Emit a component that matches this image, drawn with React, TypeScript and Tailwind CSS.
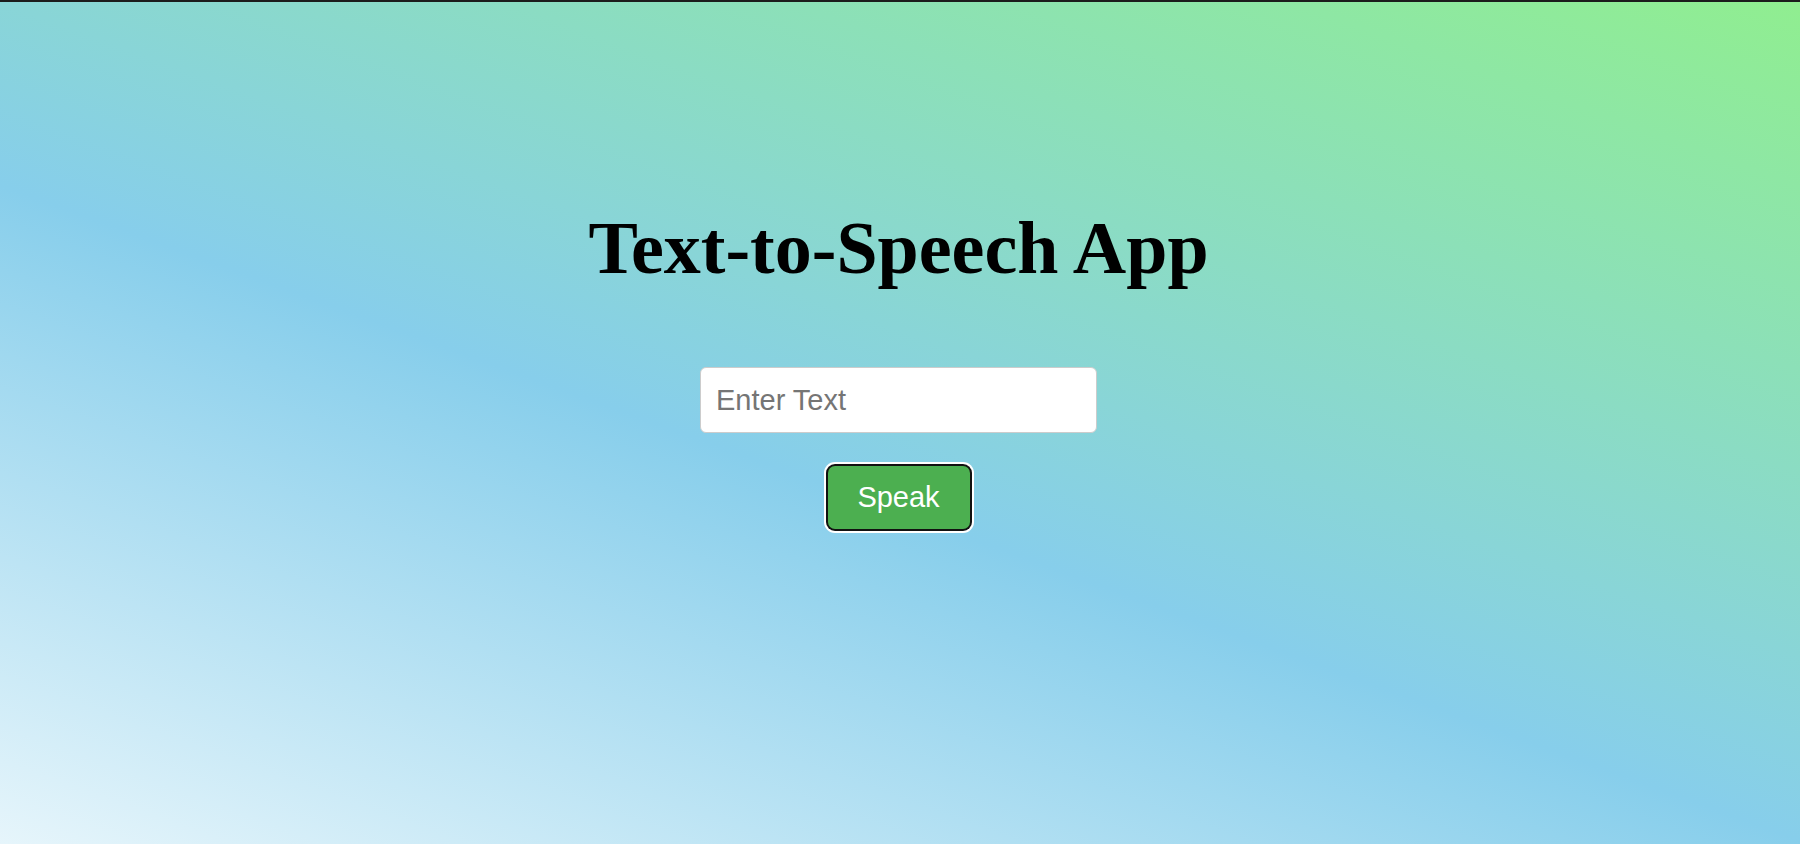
import React from "react";

export default function App() {
  return (
    <div className="min-h-screen w-full border-t-2 border-[#1c1c1c] bg-[linear-gradient(20deg,#e6f5fb_0%,#87ceeb_44%,#90ee90_100%)] flex flex-col items-center pt-[209px] pr-[3px]">
      <h1 className="font-['Liberation_Serif','Times_New_Roman',serif] text-[74px] leading-[74px] font-bold text-black">
        Text-to-Speech App
      </h1>
      <input
        type="text"
        placeholder="Enter Text"
        className="mt-[82px] w-[397px] h-[66px] rounded-[6px] border border-[#cccccc] bg-white px-[15px] font-['Liberation_Sans',Arial,sans-serif] text-[29px] text-black placeholder:text-[#757575] outline-none"
      />
      <button className="mt-[33px] w-[142px] h-[63px] rounded-[7px] bg-[#4caf50] text-white font-['Liberation_Sans',Arial,sans-serif] text-[29px] shadow-[0_0_0_2px_#111111,0_0_0_4px_#ffffff]">
        Speak
      </button>
    </div>
  );
}
